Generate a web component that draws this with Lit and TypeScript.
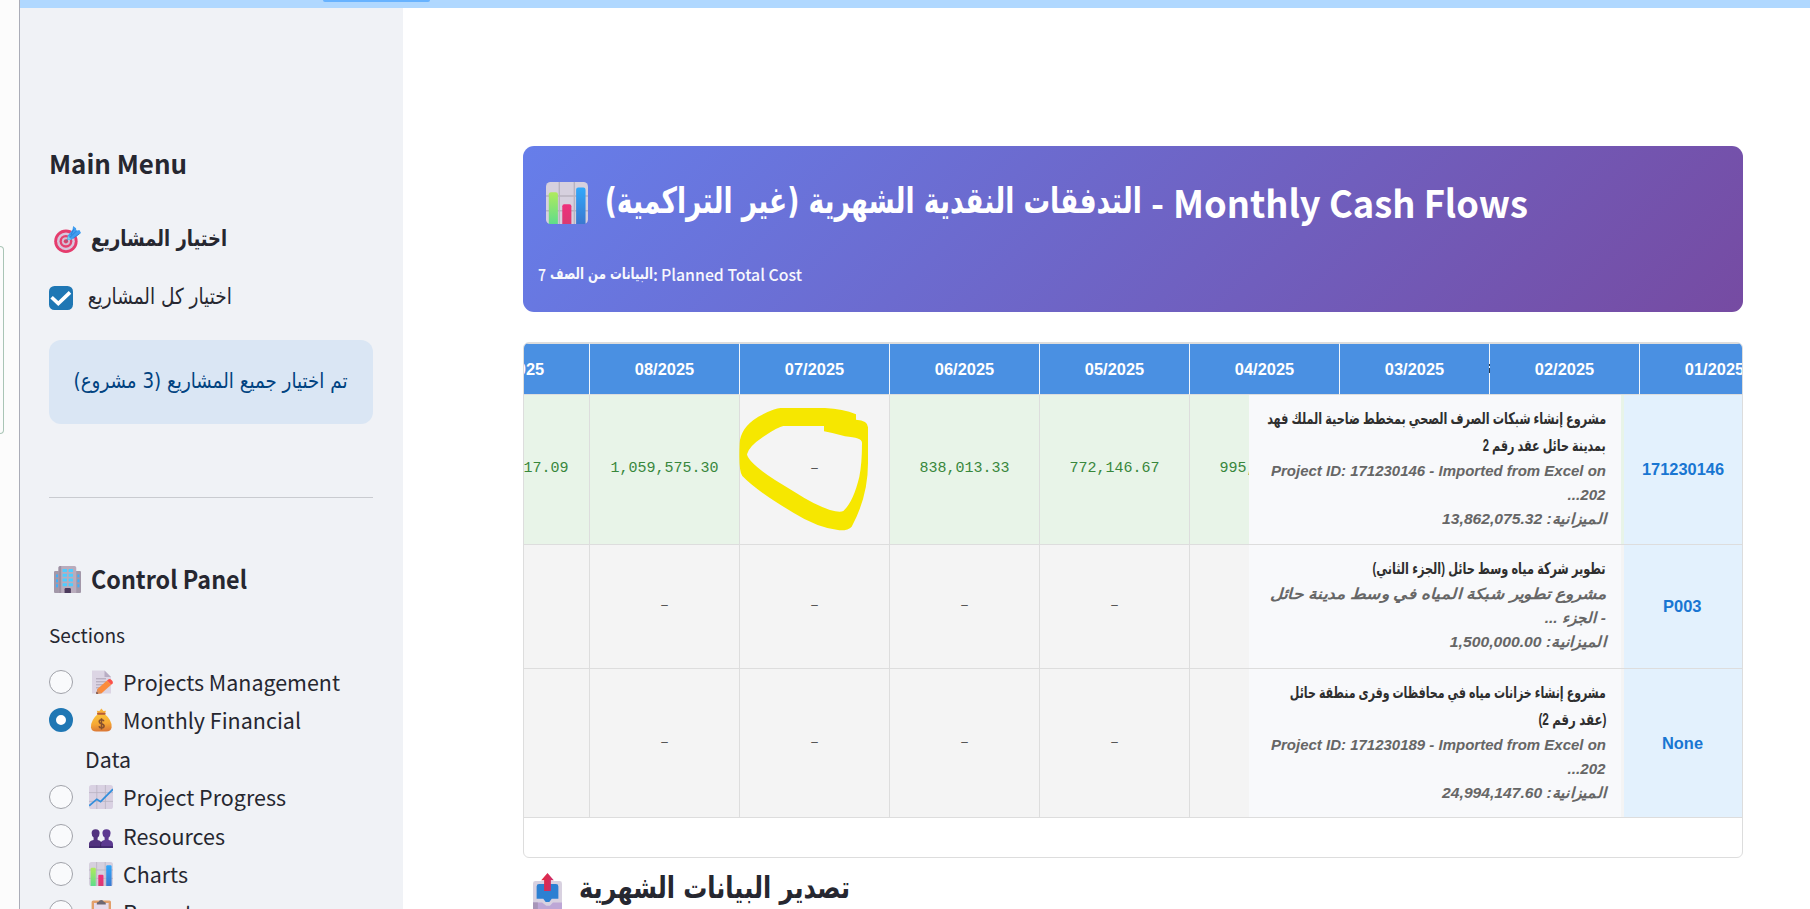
import { LitElement, html, css, svg, nothing } from "lit";
import { customElement, property } from "lit/decorators.js";

/** Single-line text condensed or widened horizontally to a given width. */
@customElement("fit-text")
class FitText extends LitElement {
  @property({ type: Number }) w = 0;
  static styles = css`
    :host { display: inline-block; flex: none; white-space: nowrap; }
    .t { display: inline-block; transform-origin: 0 50%; }
  `;
  firstUpdated() {
    const t = this.renderRoot.querySelector(".t") as HTMLElement;
    const natural = t.getBoundingClientRect().width;
    this.style.width = this.w + "px";
    if (this.dir === "rtl") t.style.transformOrigin = "100% 50%";
    if (natural > 0) t.style.transform = `scaleX(${this.w / natural})`;
  }
  render() { return html`<span class="t"><slot></slot></span>`; }
}

const chart = svg`
  <rect width="24" height="24" rx="2.6" fill="#d6d0de"/>
  <path d="M0 8H24M0 16.4H24M7.6 0V24M16.2 0V24" stroke="#b9b3c0" stroke-width=".8"/>
  <path d="M1.6 7Q1.6 5.8 2.8 5.8H5.6Q6.8 5.8 6.8 7V24H1.6Z" fill="url(#gg)"/>
  <path d="M9.3 13.8Q9.3 12.7 10.4 12.7H13.4Q14.5 12.7 14.5 13.8V24H9.3Z" fill="url(#gp)"/>
  <path d="M17.2 4.4Q17.2 3.2 18.4 3.2H21.4Q22.6 3.2 22.6 4.4V24H17.2Z" fill="url(#gb)"/>
  <defs>
    <linearGradient id="gg" x2="0" y2="1"><stop stop-color="#b0ea5c"/><stop offset="1" stop-color="#5fdc8b"/></linearGradient>
    <linearGradient id="gp" x2="0" y2="1"><stop stop-color="#ef2f7c"/><stop offset="1" stop-color="#d93a72"/></linearGradient>
    <linearGradient id="gb" x2="0" y2="1"><stop stop-color="#31a8fb"/><stop offset="1" stop-color="#3b78cf"/></linearGradient>
  </defs>`;

const icons: Record<string, unknown> = {
  chart,
  target: svg`
    <circle cx="10.6" cy="13.6" r="10.4" fill="#e53c6d"/><circle cx="10.6" cy="13.6" r="7.9" fill="#d8c5dc"/>
    <circle cx="10.6" cy="13.6" r="5.7" fill="#e5406f"/><circle cx="10.6" cy="13.6" r="3.6" fill="#d5bdd4"/>
    <circle cx="10.6" cy="13.6" r="1.9" fill="#d94169"/>
    <path d="M10.6 13.6 17 7.2" stroke="#9a5a86" stroke-width="1.3"/>
    <path d="M12.2 8.6 16.5 3 17 0 19.6 2 19.8 4.2 22.6 3.6 24 6.2 21 8.5 15.4 12.2 12 12.4Z" fill="#3f9df0"/>
    <path d="M13.5 10.8 20.4 4M15 8 17.5 2.8M17 11 22.5 7" stroke="#2878cf" stroke-width=".7"/>
    <path d="M12.4 8.6 12 12.2 15.4 12Z" fill="#6bd3ec"/>`,
  building: svg`
    <rect x="0" y="4.4" width="24" height="19.6" rx="1" fill="#a398a9"/>
    <path d="M4 1.5Q4 0 5.6 0H18.2Q19.8 0 19.8 1.5V24H4Z" fill="#b9acbd"/>
    <path d="M4 1.5Q4 0 5.6 0H6.4V24H4Z" fill="#9d91a3"/>
    <path d="M7.6 4H11.5M13 4H16.9M7.6 8.2H11.5M13 8.2H16.9M7.6 12.4H11.5M13 12.4H16.9M7.6 16.6H11.5M13 16.6H16.9" stroke="#4fcdff" stroke-width="2.7"/>
    <path d="M2.7 7.5V10M2.7 11.8V14.4M2.7 16.2V18.8M21.7 7.5V10M21.7 11.8V14.4M21.7 16.2V18.8" stroke="#41b0fa" stroke-width="1.8"/>
    <path d="M9.4 24V20.6Q9.4 19.6 10.4 19.6H14Q15 19.6 15 20.6V24Z" fill="#4b3a5c"/>`,
  memo: svg`
    <path d="M3 .5H15.5L22 7V23.5H3Z" fill="#dcd5e4"/><path d="M15.5.5V7H22Z" fill="#b8adc4"/>
    <path d="M7 8.8H17M7 11.8H17M7 14.8H15M7 17.8H11" stroke="#aba1b4" stroke-width="1"/>
    <path d="M7.3 23.7 8.4 19 18 10.6 22.2 14.8 12.6 23.2Z" fill="#fb8c3d"/>
    <path d="M18 10.6 19.6 9.3Q21 8.6 23 10.6 24.4 12.2 23.6 13.5L22.2 14.8Z" fill="#fb5049"/>
    <path d="M7.3 23.7 8.4 19 12.6 23.2Z" fill="#d9905f"/><path d="M7.1 23.8 7.7 21.7 9.4 23.4Z" fill="#4d3a47"/>`,
  bag: svg`
    <path d="M9 7 7.8 2.8 10.4 3 12.4.4 14.4 3 17 2.8 15.6 7Z" fill="#f8b23c"/>
    <path d="M9 5.8H15.6Q23.2 12.4 22.6 19.2 22 23.6 17.2 23.6H7.2Q2.4 23.6 2 19.2 1.6 12.4 9 5.8Z" fill="url(#bag)"/>
    <rect x="8" y="4.8" width="8.6" height="2" rx="1" fill="#b75b36"/>
    <path d="M14.9 13.3Q14.4 11.8 12.5 11.8 10.2 11.8 10.2 13.7 10.2 15.1 12.5 15.7 15.1 16.3 15.1 18 15.1 19.8 12.6 19.8 10.4 19.8 10 18.2M12.5 10.2V21.4" fill="none" stroke="#86502e" stroke-width="1.5"/>
    <defs><linearGradient id="bag" x2=".1" y2="1"><stop stop-color="#fbc63c"/><stop offset=".6" stop-color="#f6a834"/><stop offset="1" stop-color="#dc7a36"/></linearGradient></defs>`,
  trend: svg`
    <rect width="24" height="24" rx="2.6" fill="#d9d1e2"/>
    <path d="M0 7.6H24M0 16.4H24M7.8 0V24M16.4 0V24" stroke="#b9b2c1" stroke-width=".8"/>
    <path d="M.2 20.8 7.8 14.2 11.6 16.6 24 4.2" fill="none" stroke="#338fdc" stroke-width="1.7"/>`,
  people: svg`
    <path d="M0 24V19.5Q.4 16.6 4.6 16V13.5Q2.6 12 2.6 9 2.6 5.2 6.6 5.2 10.6 5.2 10.6 9 10.6 12 8.6 13.8V16Q12.4 16.6 12.6 20V24Z" fill="#52337f"/>
    <path d="M11.4 24V19.5Q12 16.6 15.6 16V13.5Q13.4 12 13.4 9 13.4 5.2 17.4 5.2 21.6 5.2 21.6 9 21.6 12 19.6 13.8V16Q23.8 16.6 24 20V24Z" fill="#5c3990"/>
    <path d="M0 22V24H24V22Z" fill="#432a70"/><path d="M11.8 24Q11.2 20 12.2 18" stroke="#392260" stroke-width="1" fill="none"/>`,
  clip: svg`
    <rect x="2.6" y=".6" width="19.4" height="23.4" rx="1.5" fill="#e2a06c"/><rect x="5" y="3" width="14.6" height="21" fill="#e5dced"/>
    <path d="M7.8 4.6V3.4Q7.8 2 9.4 2 10.4 0 12.2 0 14.2 0 15 2 16.8 2 16.8 3.4V4.6Z" fill="#6d6772"/>`,
  outbox: svg`
    <path d="M0 8.5Q0 6.5 2 6.5H22Q24 6.5 24 8.5V28H0Z" fill="#d8d1e0"/><path d="M0 24H7.5L11 26.8H14L16.5 24H24V31H0Z" fill="#bda7d6"/>
    <path d="M0 24H4V31H0Z" fill="#a795b8"/>
    <path d="M3 11Q3 9 5 9H19Q21 9 21 11V21H15.5L13.5 23.6H10.5L8.5 21H3Z" fill="#2c80d2"/>
    <path d="M12 0 17.2 6H14.8V14.6H9.2V6H6.8Z" fill="url(#ob)"/>
    <defs><linearGradient id="ob" y2=".2"><stop stop-color="#e8283a"/><stop offset="1" stop-color="#cb2e6c"/></linearGradient></defs>`,
};

const icon = (name: string, cls = "ic", vb = "0 0 24 24") =>
  html`<svg class=${cls} viewBox=${vb} preserveAspectRatio="none">${icons[name]}</svg>`;

const sections: { icon: string; label: string; w: number; rest?: string }[] = [
  { icon: "memo", label: "Projects Management", w: 217 },
  { icon: "bag", label: "Monthly Financial", w: 178, rest: "Data" },
  { icon: "trend", label: "Project Progress", w: 163 },
  { icon: "people", label: "Resources", w: 102 },
  { icon: "chart", label: "Charts", w: 65 },
  { icon: "clip", label: "Reports", w: 80 },
];

const months = ["09", "08", "07", "06", "05", "04", "03", "02", "01"];

const rows = [
  {
    id: "171230146", idw: 82, h: 150,
    cells: ["1,117,817.09", "1,059,575.30", "–", "838,013.33", "772,146.67", "995,146.67"],
    title: [["مشروع إنشاء شبكات الصرف الصحي بمخطط ضاحية الملك فهد", 339], ["بمدينة حائل عقد رقم 2", 123]],
    desc: [["Project ID: 171230146 - Imported from Excel on", 335, "ltr"], ["202...", 38, "rtl"], ["الميزانية: 13,862,075.32", 164, "rtl"]],
  },
  {
    id: "P003", idw: 38.5, h: 124,
    cells: ["–", "–", "–", "–", "–", ""],
    title: [["تطوير شركة مياه وسط حائل (الجزء الثاني)", 233]],
    desc: [["مشروع تطوير شبكة المياه في وسط مدينة حائل", 336, "rtl"], ["- الجزء ...", 61, "rtl"], ["الميزانية: 1,500,000.00", 156, "rtl"]],
  },
  {
    id: "None", idw: 41, h: 149,
    cells: ["–", "–", "–", "–", "–", ""],
    title: [["مشروع إنشاء خزانات مياه في محافظات وقرى منطقة حائل", 316], ["(عقد رقم 2)", 68]],
    desc: [["Project ID: 171230189 - Imported from Excel on", 335, "ltr"], ["202...", 38, "rtl"], ["الميزانية: 24,994,147.60", 164, "rtl"]],
  },
] as any[];

@customElement("app-root")
class AppRoot extends LitElement {
  static styles = css`
    :host { display: block; height: 909px; overflow: hidden; background: #fff; color: #262730;
      font-family: "Noto Sans CJK SC", "DejaVu Sans", sans-serif; }
    * { box-sizing: border-box; }
    .page { display: flex; height: 909px; overflow: hidden; }
    .edge { width: 20px; flex: none; background: #fcfcfc; border-right: 1px solid #abadb8; padding-top: 246px; }
    .panel { width: 4px; height: 188px; border: 1px solid #a9c5b6; border-left: 0; border-radius: 0 8px 8px 0; }
    .app { flex: 1; min-width: 0; display: flex; flex-direction: column; }
    .top { height: 8px; flex: none; background: #b0d8ff; padding-left: 303px; }
    .tab { width: 107px; height: 2px; background: #68b3ff; border-radius: 0 0 4px 4px; }
    .cols { flex: 1; min-height: 0; display: flex; }
    .side { width: 383px; flex: none; background: #f0f2f6; padding: 135px 30px 0 29px; overflow: hidden; }
    .ar { font-family: "DejaVu Sans", sans-serif; }
    .menu { height: 40px; line-height: 39px; font-size: 26px; font-weight: 700; }
    .head { height: 40px; display: flex; align-items: center; line-height: 40px; font-weight: 700; padding-left: 5px; gap: 10px; font-size: 25px; }
    .pick { margin-top: 36px; }
    .pick .ar { font-size: 22px; font-weight: 700; margin-top: -1px; }
    .ic { width: 27px; height: 27px; flex: none; display: block; }
    .all { margin-top: 19px; height: 40px; display: flex; align-items: center; gap: 15px; font-size: 22px; }
    .all fit-text { margin-top: -4px; }
    .box { width: 24px; height: 24px; display: block; }
    .info { margin-top: 22px; height: 84px; border-radius: 12px; background: #dae6f4; color: #004280; display: flex; align-items: center; justify-content: center; font-size: 21px; padding: 0 1px 3px 0; }
    .rule { margin-top: 73px; height: 1px; background: #c9cbd0; }
    .ctrl { margin-top: 62px; }
    .ctrl .ic { margin-top: -2px; }
    .ctrl fit-text { margin-top: -5px; }
    .label { margin-top: 25px; height: 20px; line-height: 20px; font-size: 19px; }
    .list { margin-top: 19px; }
    .opt { display: flex; align-items: flex-start; height: 38.4px; line-height: 35px; font-size: 21.6px; }
    .opt.wrap { height: 76.8px; }
    .dot { width: 24px; height: 24px; flex: none; margin-top: 6px; border-radius: 50%; background: #f9fafc; border: 1.6px solid #a0a2a9; }
    .dot.on { background: #fff; border: 7.4px solid #1f77b4; }
    .lines { padding-left: 13px; }
    .line { display: flex; height: 38.4px; padding-left: 3px; gap: 9.5px; }
    .line.second { padding-left: 0; }
    .line.second fit-text { margin-left: -1px; }
    .line .ic { width: 24px; height: 24px; margin-top: 6px; }
    .main { flex: 1; padding: 138px 67px 0 120px; min-width: 0; overflow: hidden; }
    .banner { height: 166px; border-radius: 11px; background: linear-gradient(135deg, #667eea 0%, #764ba2 100%); color: #fff; padding: 36px 0 0 23px; }
    .bt { display: flex; align-items: center; height: 42px; line-height: 42px; font-size: 38px; font-weight: 700; }
    .bt .ic { width: 42px; height: 42px; }
    .bt .ar { font-size: 36px; margin: -4px 0 0 17px; }
    .bt .dash { margin-left: 9px; }
    .bt .en { margin-left: 9px; }
    .bt .dash, .bt .en { margin-top: -2px; }
    .bs { display: flex; height: 24px; line-height: 24px; margin: 38px 0 0 -8px; font-size: 16.5px; font-weight: 500; opacity: .95; }
    .bs .ar { font-size: 15.5px; font-weight: 700; margin: 0 0 0 4px; }
    .bs .en { margin-left: 3px; }
    .table { margin-top: 30px; height: 516px; border: 1px solid #ddd; border-radius: 6px; overflow: hidden; position: relative;
      font-family: "Liberation Sans", "DejaVu Sans", sans-serif; }
    .tr { display: flex; margin-left: -84px; width: 1350px; }
    .th { width: 150px; height: 52px; flex: none; background: #4a90e2; border: solid #ddd; border-width: 1px 1px 1px 0;
      color: #fff; font-weight: 700; font-size: 16.4px; line-height: 50px; text-align: center; border-right-color: #f0f6fd; }
    .td { width: 150px; flex: none; display: flex; align-items: center; justify-content: center; border: solid #ddd; border-width: 0 1px 1px 0;
      font-family: "Liberation Mono", monospace; font-size: 15px; background: #f4f4f4; color: #555; padding-bottom: 2px; }
    .td.val { background: #e8f4e8; color: #38873c; }
    .td.cut { width: 59px; overflow: hidden; justify-content: flex-start; border-right: 0; }
    .cutin { width: 149px; flex: none; text-align: center; }
    .name { width: 372px; flex: none; background: #f8f9fb; border-bottom: 1px solid #ddd; padding: 11px 15px 0 0; display: flex; flex-direction: column; align-items: flex-end; font-weight: 700; }
    .nt { height: 27px; line-height: 26px; font-size: 16px; color: #2f2f2f; }
    .nd { height: 24px; line-height: 22.5px; font-size: 15px; font-style: italic; color: #666; }
    .gap { width: 3px; flex: none; background: #f4f4f4; border-bottom: 1px solid #ddd; }
    .gap.val { background: #e8f4e8; }
    .id { width: 118px; flex: none; display: flex; align-items: center; justify-content: center; background: #e3f1fd; border-bottom: 1px solid #ddd; color: #1976d2; font-weight: 700; font-size: 16.3px; padding: 0 1px 0 0; }
    .mark { position: absolute; left: 194px; top: 45px; width: 132px; height: 166px; overflow: visible; }
    .peek { position: absolute; left: 965px; top: 21px; width: 1px; height: 9px; }
    .export { display: flex; margin-top: 15px; padding-left: 10px; height: 60px; gap: 17px; }
    .export .ic { width: 29px; height: 38px; }
    .export .ar { font-size: 30px; font-weight: 700; line-height: 30px; margin-top: 0; }
  `;

  private row(r: any) {
    return html`<div class="tr" style="height:${r.h}px">
      ${r.cells.slice(0, 5).map((c: string) => html`<div class="td ${c !== "–" ? "val" : ""}">${c}</div>`)}
      <div class="td cut ${r.cells[5] ? "val" : ""}"><span class="cutin">${r.cells[5]}</span></div>
      <div class="name">
        ${r.title.map(([t, w]: any) => html`<fit-text class="nt" dir="rtl" .w=${w}>${t}</fit-text>`)}
        ${r.desc.map(([t, w, d]: any) => html`<fit-text class="nd" dir=${d} .w=${w}>${t}</fit-text>`)}
      </div>
      <div class="gap ${r.cells[5] ? "val" : ""}"></div>
      <div class="id"><fit-text .w=${r.idw}>${r.id}</fit-text></div>
    </div>`;
  }

  render() {
    return html`<div class="page">
      <div class="edge"><div class="panel"></div></div>
      <div class="app">
        <div class="top"><div class="tab"></div></div>
        <div class="cols">
          <aside class="side">
            <div class="menu"><fit-text .w=${138}>Main Menu</fit-text></div>
            <div class="head pick">${icon("target")}<fit-text class="ar" dir="rtl" .w=${136}>اختيار المشاريع</fit-text></div>
            <div class="all ar">
              <svg class="box" viewBox="0 0 24 24"><rect width="24" height="24" rx="5.5" fill="#1f77b4"/><path d="M2.6 11.2 9.3 17.6 21 6.4" fill="none" stroke="#fff" stroke-width="3.6"/></svg>
              <fit-text dir="rtl" .w=${144}>اختيار كل المشاريع</fit-text>
            </div>
            <div class="info ar"><fit-text dir="rtl" .w=${274}>تم اختيار جميع المشاريع (3 مشروع)</fit-text></div>
            <div class="rule"></div>
            <div class="head ctrl">${icon("building")}<fit-text .w=${156}>Control Panel</fit-text></div>
            <div class="label"><fit-text .w=${76}>Sections</fit-text></div>
            <div class="list">
              ${sections.map((s) => html`<div class="opt ${s.rest ? "wrap" : ""}">
                <span class="dot ${s.rest ? "on" : ""}"></span>
                <div class="lines">
                  <div class="line">${icon(s.icon)}<fit-text .w=${s.w}>${s.label}</fit-text></div>
                  ${s.rest ? html`<div class="line second"><fit-text .w=${46}>${s.rest}</fit-text></div>` : nothing}
                </div>
              </div>`)}
            </div>
          </aside>
          <main class="main">
            <div class="banner">
              <div class="bt">${icon("chart")}
                <fit-text class="ar" dir="rtl" .w=${537}>التدفقات النقدية الشهرية (غير التراكمية)</fit-text>
                <fit-text class="dash" .w=${13}>-</fit-text>
                <fit-text class="en" .w=${355}>Monthly Cash Flows</fit-text>
              </div>
              <div class="bs"><fit-text .w=${8}>7</fit-text><fit-text class="ar" dir="rtl" .w=${103}>البيانات من الصف</fit-text>
                <span>:</span><fit-text class="en" .w=${141}>Planned Total Cost</fit-text></div>
            </div>
            <div class="table">
              <div class="tr">${months.map((m) => html`<div class="th">${m}/2025</div>`)}</div>
              ${rows.map((r) => this.row(r))}
              <svg class="mark" viewBox="654 174 396 498" preserveAspectRatio="none">
                <path transform="translate(59 63)" fill="#f6e700" fill-rule="evenodd" d="M784 171H916Q970 173 1009 190V206Q1045 208 1045 229V337Q1045 437 996 527 986 539 959 538 891 529 821 485 Q711 420 668 375 656 360 660 277 662 230 716 197 766 170 784 171ZM791 225H913V241Q941 246 976 256 1027 260 1027 275 1027 337 1019 377 1001 452 971 480 961 486 931 477 881 460 831 427L766 387Q686 335 682 310 686 287 731 257 776 227 791 225Z"/>
              </svg>
              <svg class="peek" viewBox="0 0 1 9"><path d="M0 0H1V2H0ZM0 4H1V9H0Z" fill="#2b3a4a"/></svg>
            </div>
            <div class="export">${icon("outbox", "ic", "0 0 24 31")}<fit-text class="ar" dir="rtl" .w=${271}>تصدير البيانات الشهرية</fit-text></div>
          </main>
        </div>
      </div>
    </div>`;
  }
}
